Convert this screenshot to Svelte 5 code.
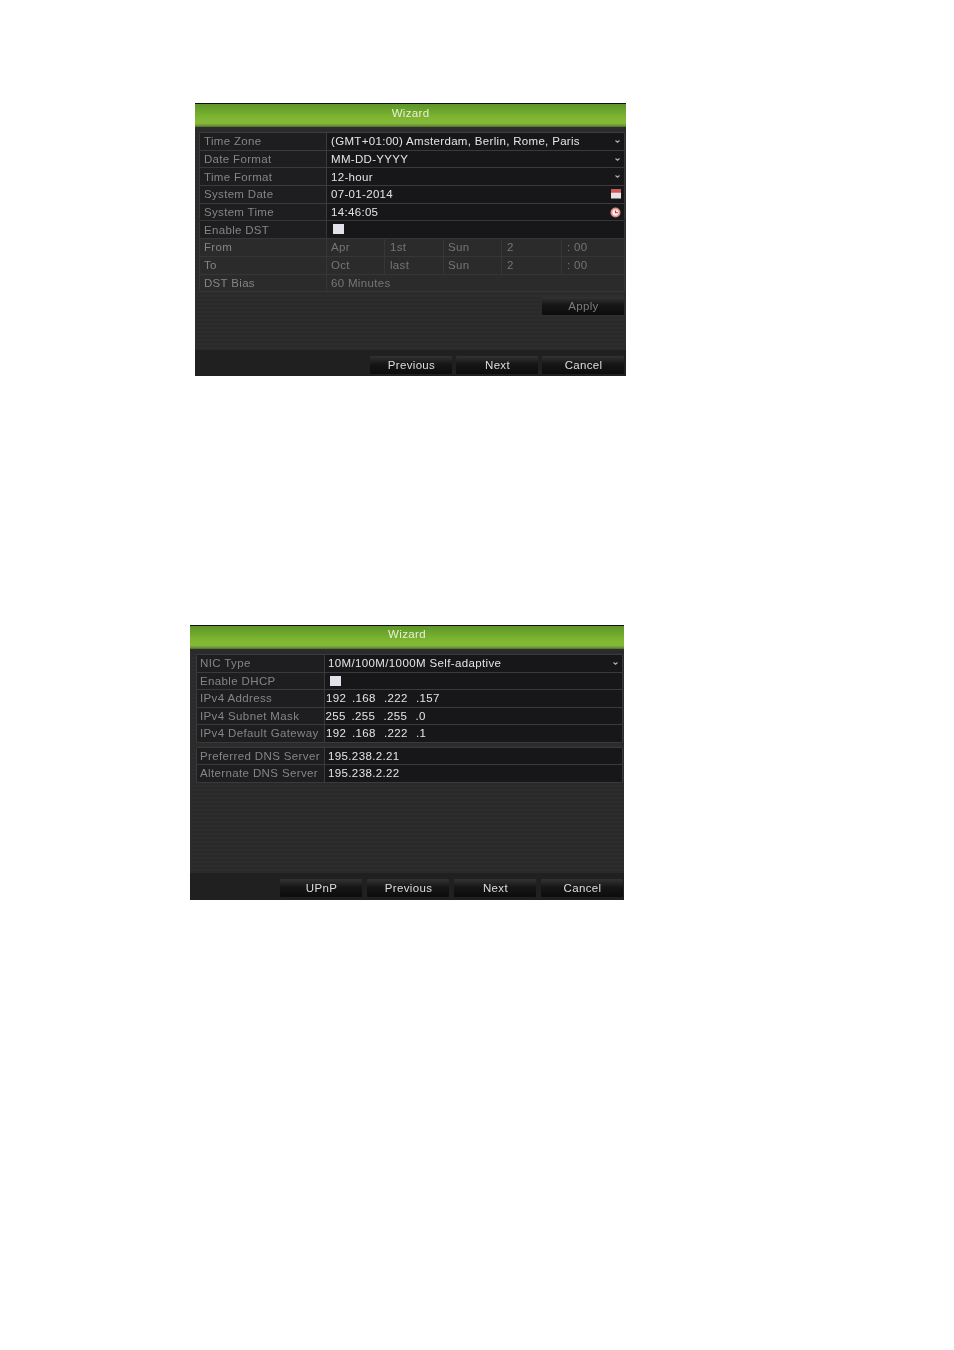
<script>
  const dateRows = [
    { label: 'Time Zone', value: '(GMT+01:00) Amsterdam, Berlin, Rome, Paris', icon: 'chev' },
    { label: 'Date Format', value: 'MM-DD-YYYY', icon: 'chev' },
    { label: 'Time Format', value: '12-hour', icon: 'chev' },
    { label: 'System Date', value: '07-01-2014', icon: 'cal' },
    { label: 'System Time', value: '14:46:05', icon: 'clock' }
  ];
  const dstRows = [
    { label: 'From', cells: ['Apr', '1st', 'Sun', '2', ': 00'] },
    { label: 'To', cells: ['Oct', 'last', 'Sun', '2', ': 00'] }
  ];
  const ipRows = [
    { label: 'IPv4 Address', cls: '', segs: ['192', '.168', '.222', '.157'] },
    { label: 'IPv4 Subnet Mask', cls: 'shift', segs: ['255', '.255', '.255', '.0'] },
    { label: 'IPv4 Default Gateway', cls: '', segs: ['192', '.168', '.222', '.1'] }
  ];
  const dnsRows = [
    { label: 'Preferred DNS Server', value: '195.238.2.21' },
    { label: 'Alternate DNS Server', value: '195.238.2.22' }
  ];
</script>

{#snippet icon(kind)}
  {#if kind === 'chev'}
    <svg class="ico" width="7" height="5" viewBox="0 0 7 5"><path d="M1.5 1.5 L3.5 3.2 L5.5 1.5" fill="none" stroke="#b4b4b4" stroke-width="1.1"/></svg>
  {:else if kind === 'cal'}
    <svg class="ico" width="10" height="10" viewBox="0 0 10 10"><rect x="0" y="0.5" width="10" height="9" fill="#e6e2e6"/><rect x="0" y="0.5" width="10" height="3.2" fill="#d9524f"/></svg>
  {:else}
    <svg class="ico" width="11" height="11" viewBox="0 0 11 11"><circle cx="5.5" cy="5.5" r="5" fill="#e88a86"/><circle cx="5.5" cy="5.5" r="3.2" fill="#f2eef2"/><path d="M5.5 3.4 V5.7 H8" fill="none" stroke="#c23a3a" stroke-width="1.1"/></svg>
  {/if}
{/snippet}

<main class="page">
  <section class="panel one">
    <header class="title"><span>Wizard</span></header>
    <div class="content">
      <div class="group first">
        {#each dateRows as r}
          <div class="row">
            <div class="label">{r.label}</div>
            <div class="value"><span>{r.value}</span>{@render icon(r.icon)}</div>
          </div>
        {/each}
      </div>
      <div class="group second">
        <div class="row">
          <div class="label">Enable DST</div>
          <div class="value"><i class="check"></i></div>
        </div>
        {#each dstRows as r}
          <div class="row">
            <div class="label">{r.label}</div>
            <div class="cells">
              {#each r.cells as c}<div class="cell">{c}</div>{/each}
            </div>
          </div>
        {/each}
        <div class="row">
          <div class="label">DST Bias</div>
          <div class="value dim">60 Minutes</div>
        </div>
      </div>
      <div class="apply"><button class="btn dimbtn">Apply</button></div>
    </div>
    <footer class="foot">
      <button class="btn">Previous</button>
      <button class="btn">Next</button>
      <button class="btn">Cancel</button>
    </footer>
  </section>

  <section class="panel two">
    <header class="title"><span>Wizard</span></header>
    <div class="content">
      <div class="group">
        <div class="row">
          <div class="label">NIC Type</div>
          <div class="value"><span>10M/100M/1000M Self-adaptive</span>{@render icon('chev')}</div>
        </div>
        <div class="row">
          <div class="label">Enable DHCP</div>
          <div class="value"><i class="check"></i></div>
        </div>
        {#each ipRows as r}
          <div class="row">
            <div class="label">{r.label}</div>
            <div class="value ip {r.cls}">
              {#each r.segs as s}<span class="seg">{s}</span>{/each}
            </div>
          </div>
        {/each}
      </div>
      <div class="group dns">
        {#each dnsRows as r}
          <div class="row">
            <div class="label">{r.label}</div>
            <div class="value"><span>{r.value}</span></div>
          </div>
        {/each}
      </div>
    </div>
    <footer class="foot">
      <button class="btn">UPnP</button>
      <button class="btn">Previous</button>
      <button class="btn">Next</button>
      <button class="btn">Cancel</button>
    </footer>
  </section>
</main>

<style>
  :global(body) { margin: 0; background: #fff; }
  .page {
    height: 1350px;
    box-sizing: border-box;
    padding-top: 103px;
    font-family: "Liberation Sans", Arial, sans-serif;
    font-size: 11.5px;
    letter-spacing: 0.32px;
  }
  .panel {
    display: flex;
    flex-direction: column;
    box-sizing: border-box;
    background: repeating-linear-gradient(180deg, #2d2d2d 0 2px, #2a2a2a 2px 4px);
  }
  .one { width: 431px; height: 273px; margin-left: 195px; }
  .two { width: 434px; height: 275px; margin-left: 190px; margin-top: 249px; letter-spacing: 0.37px; }
  .title {
    height: 24px;
    flex: none;
    box-sizing: border-box;
    border-top: 1px solid #111;
    padding-bottom: 5px;
    background: linear-gradient(180deg, #5c9629 0%, #6ea62c 30%, #7fb733 62%, #84b938 84%, #6c9335 94%, #4f6b33 100%);
    color: #e6efd8;
    display: flex;
    align-items: center;
    justify-content: center;
    filter: blur(0.4px);
  }
  .two .title { padding-bottom: 7px; }
  .content { flex: 1; min-height: 0; padding: 5px 1px 0 4px; }
  .two .content { padding: 5px 1px 0 6px; }
  .group {
    border: 1px solid #3a3a3a;
    border-radius: 2px;
    background: #3a3a3a;
    display: flex;
    flex-direction: column;
    gap: 1px;
  }
  .group.first { border-bottom: 0; }
  .group.second { background: #363636; border-color: #363636; }
  .group.dns { margin-top: 4px; }
  .row {
    height: 16.7px;
    display: grid;
    grid-template-columns: 126px 1fr;
    column-gap: 1px;
    align-items: stretch;
  }
  .two .row { grid-template-columns: 127px 1fr; height: 16.5px; }
  .label {
    background: #1e1e20;
    color: #858585;
    padding-left: 4px;
    display: flex;
    align-items: center;
    white-space: nowrap;
    filter: blur(0.4px);
  }
  .two .label { padding-left: 3px; }
  .group.second .label { background: #2b2b2b; }
  .group.second .row:first-child .label { background: #1e1e20; }
  .value {
    background: #17171a;
    color: #e4e4e4;
    padding: 0 3px 0 4px;
    display: flex;
    align-items: center;
    justify-content: space-between;
    white-space: nowrap;
    filter: blur(0.4px);
  }
  .value.dim { background: #2b2b2b; color: #777; }
  .two .value { padding-left: 3px; }
  .two .value.ip { justify-content: flex-start; padding-left: 1px; }
  .two .value.ip.shift { padding-left: 0.5px; }
  .seg { width: 32px; }
  .seg:first-child { width: 26px; }
  .cells {
    display: grid;
    grid-template-columns: 57px 58px 57px 59px 1fr;
    column-gap: 1px;
  }
  .cell {
    background: #2b2b2b;
    color: #757575;
    padding-left: 5px;
    display: flex;
    align-items: center;
    filter: blur(0.4px);
  }
  .cell:nth-child(odd) { padding-left: 4px; }
  .cell:last-child { padding-left: 5px; }
  .check {
    display: block;
    width: 11px;
    height: 10px;
    margin-left: 2px;
    background: #e2e2ea;
  }
  .one .check { margin-top: -1px; }
  .ico { display: block; flex: none; }
  .apply { display: flex; justify-content: flex-end; margin-top: 5px; padding-right: 1px; }
  .foot {
    height: 26px;
    flex: none;
    box-sizing: border-box;
    padding: 6px 2px 2px 0;
    display: flex;
    justify-content: flex-end;
    gap: 4px;
    background: #202020;
  }
  .two .foot { height: 27px; padding-right: 1px; gap: 5px; }
  .btn {
    width: 82px;
    height: 18px;
    padding: 0 0 1px 1px;
    border: 0;
    border-radius: 1px;
    background: linear-gradient(180deg, #333 0%, #161616 45%, #0c0c0c 100%);
    color: #dedede;
    font: inherit;
    letter-spacing: inherit;
    filter: blur(0.3px);
  }
  .dimbtn { color: #7d7d7d; }
</style>
